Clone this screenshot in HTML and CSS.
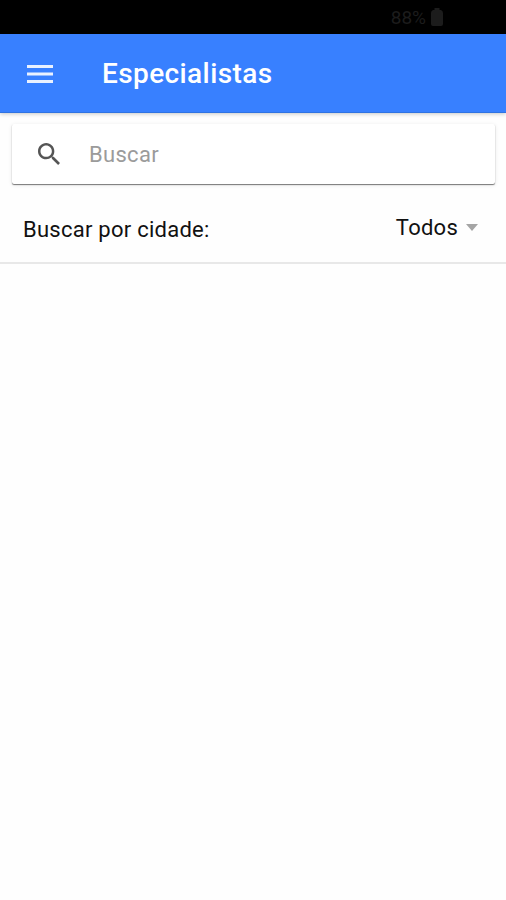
FILE: index.html
```html
<!DOCTYPE html>
<html lang="pt-BR">
<head>
    <meta charset="UTF-8">
    <meta name="viewport" content="width=device-width, initial-scale=1.0">
    <title>Especialistas</title>
    <link rel="stylesheet" href="styles.css">
</head>
<body>
<div class="status-bar">
    <span class="battery-level">88%</span>
    <svg class="battery-icon" width="12" height="18" viewBox="0 0 12 18">
        <path d="M3.5 0h5v2h1.5q2 1 2 3v11q0 2-2 2H2q-2 0-2-2V5q0-2 2-3h1.5z"/>
    </svg>
</div>
<header class="toolbar">
    <button type="button" class="menu-button" aria-label="Menu">
        <svg width="26" height="18" viewBox="0 0 26 18">
            <path d="M0 0h26v3H0zM0 7.5h26v3H0zM0 15h26v3H0z"/>
        </svg>
    </button>
    <h1>Especialistas</h1>
</header>
<main>
    <form class="searchbar">
        <svg class="search-icon" width="22" height="22" viewBox="3 3 17.5 17.5">
            <path d="M15.5 14h-.79l-.28-.27C15.41 12.59 16 11.11 16 9.5 16 5.91 13.09 3 9.5 3S3 5.91 3 9.5 5.91 16 9.5 16c1.61 0 3.09-.59 4.23-1.57l.27.28v.79l5 4.99L20.49 19l-4.99-5zm-6 0C7.01 14 5 11.99 5 9.5S7.01 5 9.5 5 14 7.01 14 9.5 11.99 14 9.5 14z"/>
        </svg>
        <input type="text" placeholder="Buscar">
    </form>
    <div class="filter">
        <span class="filter-label">Buscar por cidade:</span>
        <span class="filter-value">Todos</span>
        <span class="filter-arrow"></span>
    </div>
</main>
</body>
</html>
```

FILE: styles.css
```css
body {
    font-family: Roboto, sans-serif;
    background-color: #fefefe;
    color: #111;
    margin: 0;
}
.status-bar {
    display: flex;
    align-items: center;
    justify-content: flex-end;
    gap: 5px;
    height: 34px;
    padding-right: 63px;
    box-sizing: border-box;
    background: #000;
    color: #1c1c1c;
}
.battery-level {
    font-size: 19px;
    line-height: 34px;
    padding-top: 1px;
}
.battery-icon {
    fill: #1c1c1c;
}
.toolbar {
    display: flex;
    align-items: center;
    height: 79px;
    padding: 2px 0 0 27px;
    box-sizing: border-box;
    background: #3880ff;
    border-bottom: 1px solid #3073e2;
    box-shadow: 0 1px 4px rgba(0, 0, 0, 0.22);
}
.menu-button {
    display: flex;
    padding: 0;
    border: none;
    background: none;
}
.menu-button svg {
    fill: #e9f1ff;
}
h1 {
    margin: 0 0 0 49px;
    color: #fff;
    font-size: 28px;
    font-weight: 500;
    line-height: 36px;
    letter-spacing: 0.4px;
}
.searchbar {
    display: flex;
    align-items: center;
    height: 60px;
    margin: 11px 11px 0 12px;
    padding-left: 26px;
    box-sizing: border-box;
    background: #fff;
    border-radius: 2px;
    box-shadow: 0 1px 1px rgba(0, 0, 0, 0.5), 0 1px 4px rgba(0, 0, 0, 0.1);
}
.search-icon {
    fill: #555;
}
.searchbar input {
    flex: 1;
    min-width: 0;
    margin-left: 29px;
    padding: 0;
    border: none;
    outline: none;
    background: none;
    color: #111;
    font-family: inherit;
    font-size: 22px;
    letter-spacing: 0.3px;
}
.searchbar input::placeholder {
    color: #9b9b9b;
}
.filter {
    display: flex;
    align-items: center;
    height: 80px;
    padding: 0 28px 0 23px;
    box-sizing: border-box;
    border-bottom: 2px solid #e8e8e8;
    font-size: 22px;
    letter-spacing: 0.25px;
}
.filter-label {
    flex: 1;
    padding-top: 12px;
}
.filter-value {
    padding-top: 9px;
}
.filter-arrow {
    margin: 8px 0 0 8px;
    border: 6.5px solid transparent;
    border-top: 7px solid #a5a5a5;
    border-bottom: 0;
}
```
